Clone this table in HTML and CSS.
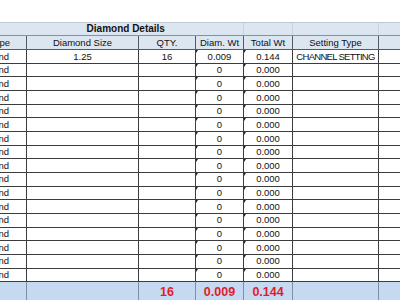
FILE: index.html
```html
<!DOCTYPE html>
<html>
<head>
<meta charset="utf-8">
<link rel="stylesheet" href="styles.css">
</head>
<body>
<div class="sheet">
<table class="grid">
<colgroup>
<col class="c0"><col class="c1"><col class="c2"><col class="c3"><col class="c4"><col class="c5"><col class="c6">
</colgroup>
<tr class="band">
<td class="band-a"></td>
<td class="band-title" colspan="3"><span class="title">Diamond Details</span></td>
<td class="band-b"></td>
<td class="band-b"></td>
<td class="band-b"></td>
</tr>
<tr class="head">
<td class="first">Diamond Type</td>
<td>Diamond Size</td>
<td>QTY.</td>
<td>Diam. Wt</td>
<td>Total Wt</td>
<td>Setting Type</td>
<td></td>
</tr>
<tr class="row"><td class="name">Diamond</td><td>1.25</td><td>16</td><td class="mk">0.009</td><td class="mk">0.144</td><td class="narrow">CHANNEL SETTING</td><td></td></tr>
<tr class="row"><td class="name">Diamond</td><td></td><td></td><td class="mk">0</td><td class="mk">0.000</td><td></td><td></td></tr>
<tr class="row"><td class="name">Diamond</td><td></td><td></td><td class="mk">0</td><td class="mk">0.000</td><td></td><td></td></tr>
<tr class="row"><td class="name">Diamond</td><td></td><td></td><td class="mk">0</td><td class="mk">0.000</td><td></td><td></td></tr>
<tr class="row"><td class="name">Diamond</td><td></td><td></td><td class="mk">0</td><td class="mk">0.000</td><td></td><td></td></tr>
<tr class="row"><td class="name">Diamond</td><td></td><td></td><td class="mk">0</td><td class="mk">0.000</td><td></td><td></td></tr>
<tr class="row"><td class="name">Diamond</td><td></td><td></td><td class="mk">0</td><td class="mk">0.000</td><td></td><td></td></tr>
<tr class="row"><td class="name">Diamond</td><td></td><td></td><td class="mk">0</td><td class="mk">0.000</td><td></td><td></td></tr>
<tr class="row"><td class="name">Diamond</td><td></td><td></td><td class="mk">0</td><td class="mk">0.000</td><td></td><td></td></tr>
<tr class="row"><td class="name">Diamond</td><td></td><td></td><td class="mk">0</td><td class="mk">0.000</td><td></td><td></td></tr>
<tr class="row"><td class="name">Diamond</td><td></td><td></td><td class="mk">0</td><td class="mk">0.000</td><td></td><td></td></tr>
<tr class="row"><td class="name">Diamond</td><td></td><td></td><td class="mk">0</td><td class="mk">0.000</td><td></td><td></td></tr>
<tr class="row"><td class="name">Diamond</td><td></td><td></td><td class="mk">0</td><td class="mk">0.000</td><td></td><td></td></tr>
<tr class="row"><td class="name">Diamond</td><td></td><td></td><td class="mk">0</td><td class="mk">0.000</td><td></td><td></td></tr>
<tr class="row"><td class="name">Diamond</td><td></td><td></td><td class="mk">0</td><td class="mk">0.000</td><td></td><td></td></tr>
<tr class="row"><td class="name">Diamond</td><td></td><td></td><td class="mk">0</td><td class="mk">0.000</td><td></td><td></td></tr>
<tr class="row"><td class="name">Diamond</td><td></td><td></td><td class="mk">0</td><td class="mk">0.000</td><td></td><td></td></tr>
<tr class="total"><td></td><td></td><td>16</td><td>0.009</td><td>0.144</td><td></td><td></td></tr>
</table>
</div>
</body>
</html>
```
FILE: styles.css
```css
html, body {
  margin: 0;
  padding: 0;
  background: #ffffff;
  overflow: hidden;
}
.sheet {
  width: 400px;
  height: 300px;
  overflow: hidden;
  padding-top: 22px;
  box-sizing: border-box;
}
.grid {
  margin-left: -60px;
  border-collapse: collapse;
  table-layout: fixed;
  width: 480px;
  font-family: "Liberation Sans", Arial, sans-serif;
  font-size: 9.5px;
  color: #111111;
}
.c0 { width: 86px; }
.c1 { width: 112px; }
.c2 { width: 57px; }
.c3 { width: 48px; }
.c4 { width: 49px; }
.c5 { width: 86px; }
.c6 { width: 42px; }
td {
  padding: 0;
  text-align: center;
  white-space: nowrap;
  overflow: hidden;
  line-height: 1;
  position: relative;
}
.band td {
  height: 12px;
  background: #dce6f1;
  border-top: 1px solid #c0c8d2;
  border-bottom: 1px solid #8c9096;
}
.band-b { border-left: 1px solid #c6d2e0; }
.title {
  font-weight: bold;
  font-size: 10px;
  position: relative;
  left: -9px;
}
.head td {
  height: 13px;
  background: #dce6f1;
  border: 1px solid #555a60;
  border-top-color: #8c9096;
}
.head td.first {
  padding-right: 8px;
}
.row td {
  height: 12.67px;
  border: 1px solid #3c3c3c;
}
.row td.name {
  text-align: left;
  padding-left: 30px;
}
.row td.narrow {
  letter-spacing: -0.7px;
}
.mk::before {
  content: "";
  position: absolute;
  left: 0;
  top: 0;
  border-top: 3px solid #222222;
  border-right: 2px solid transparent;
}
.total td {
  height: 20px;
  background: #c5d9f1;
  border-top: 1px solid #3c3c3c;
  border-left: 1px solid #7e8ea3;
  border-right: 1px solid #7e8ea3;
  color: #e21c2a;
  font-weight: bold;
  font-size: 12.5px;
}
```
